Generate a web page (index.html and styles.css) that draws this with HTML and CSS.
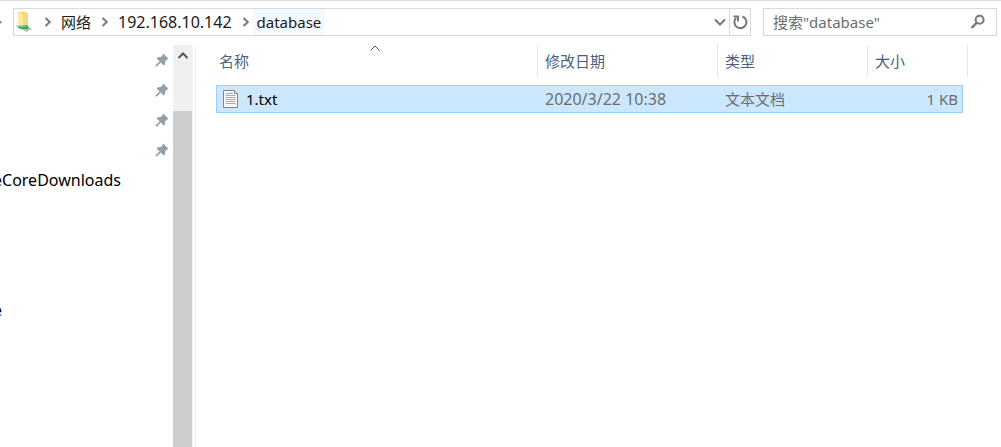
FILE: index.html
```html
<!DOCTYPE html>
<html lang="zh-CN">
<head>
<meta charset="utf-8">
<title>database</title>
<link rel="stylesheet" href="styles.css">
</head>
<body>
<svg class="defs" aria-hidden="true">
  <symbol id="pin" viewBox="0 0 14 14"><path d="M8.2 .6 13.400 5.800 11.800 6.800 10.100 8.400 9.900 11.400 8.600 12.400 5.800 9.600 1.800 13.400 .6 13.400 .6 12.200 4.600 8.400 1.700 5.500 2.800 4.200 5.900 4 7.400 2.500Z" fill="#929ea8"/></symbol>
  <symbol id="chevron" viewBox="0 0 8 10"><path d="M1.500 1 5.800 5 1.500 9" fill="none" stroke="#777" stroke-width="1.900"/></symbol>
</svg>
<header class="toolbar">
  <button class="up" aria-label="向上"><svg width="14" height="14" viewBox="0 0 14 14"><path d="M2 8 7 3 12 8M7 3V13" fill="none" stroke="#777" stroke-width="2"/></svg></button>
  <nav class="address" aria-label="地址">
    <svg class="folder" width="18" height="20" viewBox="0 0 18 20">
      <path d="M3 0H11L13 2V15H3Z" fill="#f3cf70"/>
      <path d="M3 0 8 2V15.5L3 14Z" fill="#ffe8a2"/>
      <path d="M8 2H12.5V14L8 15Z" fill="#f6d77f"/>
      <path d="M1 13.500 5 13.500 16 16 17 17.500 13 18.500 2 15.500Z" fill="#b9bfbd"/>
      <path d="M4 14 12 13 14 15.500 12 17.500 7 17.500 3.500 16Z" fill="#35b558"/>
      <path d="M5 14.500 11 14" stroke="#74d486"/>
      <path d="M9 18 13 19" stroke="#b9bfbd" stroke-width="2"/>
    </svg>
    <svg class="chev" width="8" height="10"><use href="#chevron"/></svg>
    <a class="crumb" href="#">网络</a>
    <svg class="chev" width="8" height="10"><use href="#chevron"/></svg>
    <a class="crumb number" href="#">192.168.10.142</a>
    <svg class="chev" width="8" height="10"><use href="#chevron"/></svg>
    <a class="crumb current" href="#">database</a>
    <button class="history" aria-label="以前的位置"><svg width="12" height="8" viewBox="0 0 12 8"><path d="M1 1.500 6 6.500 11 1.500" fill="none" stroke="#777" stroke-width="2"/></svg></button>
    <button class="refresh" aria-label="刷新"><svg width="16" height="16" viewBox="0 0 16 16"><path d="M10.500 2.500A6 6 0 1 1 4 4" fill="none" stroke="#777" stroke-width="2"/><path d="M1.500 2.500H6V7.500" fill="none" stroke="#777" stroke-width="2"/></svg></button>
  </nav>
  <form class="search">
    <input type="text" placeholder="搜索&quot;database&quot;" aria-label="搜索">
    <button type="button" aria-label="搜索"><svg width="16" height="16" viewBox="0 0 16 16"><circle cx="9.600" cy="5.800" r="4" fill="none" stroke="#777" stroke-width="2"/><path d="M6.600 8.800 1.500 14" stroke="#777" stroke-width="2.400"/></svg></button>
  </form>
</header>
<div class="body">
  <aside class="sidebar">
    <ul class="tree">
      <li><svg class="pin"><use href="#pin"/></svg></li>
      <li><svg class="pin"><use href="#pin"/></svg></li>
      <li><svg class="pin"><use href="#pin"/></svg></li>
      <li><svg class="pin"><use href="#pin"/></svg></li>
      <li><a class="entry" href="#">eCoreDownloads</a></li>
    </ul>
    <ul class="tree lower">
      <li><a class="entry network" href="#">e</a></li>
    </ul>
  </aside>
  <div class="scrollbar">
    <button aria-label="向上滚动"><svg width="12" height="8" viewBox="0 0 12 8"><path d="M1.500 7 6 2.500 10.500 7" fill="none" stroke="#555" stroke-width="2"/></svg></button>
    <div class="thumb"></div>
  </div>
  <main class="files">
    <table>
      <colgroup><col class="c-edge"><col class="c-name"><col class="c-date"><col class="c-type"><col class="c-size"><col class="c-end"></colgroup>
      <thead>
        <tr>
          <th colspan="2"><div class="head">名称<svg class="sort" width="10" height="6" viewBox="0 0 10 6"><path d="M.5 5.500 5 1 9.500 5.500" fill="none" stroke="#555"/></svg></div></th>
          <th><div class="head">修改日期</div></th>
          <th><div class="head">类型</div></th>
          <th colspan="2"><div class="head">大小</div></th>
        </tr>
      </thead>
      <tbody>
        <tr>
          <td></td>
          <td class="sel name"><div class="file"><svg width="16" height="18" viewBox="0 0 16 18"><path d="M.5 .5H11.500L14.500 3.500V17.500H.5Z" fill="#fafafa" stroke="#858585"/><path d="M11.500 .5V3.500H14.500" fill="#ddd" stroke="#858585"/><path d="M2.500 3.500H10M2.500 5.500H12.500M2.500 7.500H12.500M2.500 9.500H12.500M2.500 11.500H12.500M2.500 13.500H12.500" stroke="#aaa"/></svg><span>1.txt</span></div></td>
          <td class="sel number">2020/3/22 10:38</td>
          <td class="sel">文本文档</td>
          <td class="sel size">1 KB</td>
          <td></td>
        </tr>
      </tbody>
    </table>
  </main>
</div>
</body>
</html>
```
FILE: styles.css
```css
* { box-sizing: border-box; }
body {
  margin: 0;
  min-height: 100vh;
  display: flex;
  flex-direction: column;
  overflow: hidden;
  background: #fff;
  color: #000;
  font: 15px/20px "Noto Sans", "Noto Sans CJK SC", sans-serif;
}
button { border: 0; padding: 0; background: none; display: flex; align-items: center; justify-content: center; }
a { color: inherit; text-decoration: none; }
svg { display: block; flex: none; }
.defs { position: absolute; width: 0; height: 0; }

.toolbar {
  display: flex;
  height: 45px;
  padding: 7px 4px 9px 0;
  border-top: 1px solid #d9d9d9;
}
.up { width: 13px; justify-content: flex-end; overflow: hidden; padding-right: 10px; }
.address { flex: 1; display: flex; height: 28px; align-items: center; border: 1px solid #d9d9d9; }
.folder { margin: 0 11px 0 1px; }
.chev { margin-right: 3px; }
.crumb { height: 26px; padding: 0 6px; line-height: 26px; margin-right: 4px; color: #1a1a1a; }
.number { font-size: 16px; }
.current { background: #f3f9fe; padding: 0 4px; }
.history { margin-left: auto; width: 18px; height: 26px; }
.refresh { width: 21px; height: 26px; border-left: 1px solid #d9d9d9; }
.search { width: 234px; height: 28px; margin-left: 12px; display: flex; align-items: center; border: 1px solid #d9d9d9; padding: 0 10px 0 9px; }
.search input { flex: 1; min-width: 0; border: 0; padding: 0; outline: 0; background: none; font: inherit; }
.search input::placeholder { color: #6d6d6d; opacity: 1; }

.body { flex: 1; display: flex; }
.sidebar { width: 173px; overflow: hidden; }
.tree { list-style: none; margin: 0; padding: 0; }
.tree li { height: 30px; display: flex; align-items: center; }
.lower { padding-top: 100px; }
.pin { width: 14px; height: 14px; margin-left: 155px; }
.entry { margin-left: -7px; font-size: 16px; }
.network { color: #003; }
.scrollbar { width: 20px; display: flex; flex-direction: column; background: #f0f0f0; border-right: 1px solid #f8f8f8; }
.scrollbar button { height: 20px; }
.thumb { flex: 1; margin-top: 46px; background: #cdcdcd; }
.files { flex: 1; margin-left: 2px; padding-left: 16px; border-left: 1px solid #f3f3f3; }

table { table-layout: fixed; width: 756px; border-collapse: separate; border-spacing: 0; }
.c-edge { width: 4px; }
.c-name { width: 322px; }
.c-date { width: 180px; }
.c-type { width: 150px; }
.c-size { width: 95px; }
.c-end { width: 5px; }
th { padding: 0 0 8px; font-weight: 400; text-align: left; }
.head { position: relative; height: 32px; line-height: 32px; padding-left: 7px; border-right: 1px solid #e5e5e5; color: #4c607a; }
.sort { position: absolute; top: 0; left: 50%; margin-left: -5px; }
td { height: 28px; padding: 0; }
.sel { padding: 0 7px; background: #cce8ff; border: solid #99d1ff; border-width: 1px 0; color: #6d6d6d; }
.name { padding-left: 6px; color: #000; border-left-width: 1px; }
.file { display: flex; align-items: center; gap: 7px; }
.size { text-align: right; padding-right: 4px; border-right-width: 1px; }
```
